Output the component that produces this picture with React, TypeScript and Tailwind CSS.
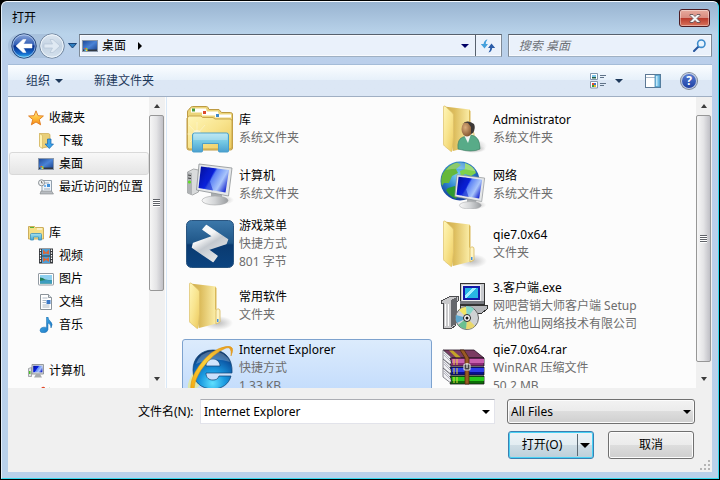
import React from "react";

type IconProps = { className?: string };

function Gradients() {
  return (
    <svg className="absolute size-0" aria-hidden="true">
      <defs>
        <linearGradient id="folderFront" x1="0" y1="0" x2="1" y2="1">
          <stop offset="0" stopColor="#fff6b8" />
          <stop offset="0.5" stopColor="#f8e48e" />
          <stop offset="1" stopColor="#ecc95c" />
        </linearGradient>
        <linearGradient id="folderBack" x1="0" y1="0" x2="1" y2="0">
          <stop offset="0" stopColor="#cfae50" />
          <stop offset="0.35" stopColor="#dcbc5c" />
          <stop offset="0.85" stopColor="#f9eaa2" />
          <stop offset="1" stopColor="#f3dd88" />
        </linearGradient>
        <linearGradient id="glassBlue" x1="0" y1="0" x2="0" y2="1">
          <stop offset="0" stopColor="#a8e0ee" />
          <stop offset="0.5" stopColor="#72c6e2" />
          <stop offset="1" stopColor="#4a9fd0" />
        </linearGradient>
        <linearGradient id="screenBlue" x1="0" y1="0.2" x2="1" y2="0.7">
          <stop offset="0" stopColor="#0310a0" />
          <stop offset="0.4" stopColor="#0a22e0" />
          <stop offset="0.46" stopColor="#5d83f5" />
          <stop offset="0.75" stopColor="#a9c5fb" />
          <stop offset="1" stopColor="#1a2ad0" />
        </linearGradient>
        <linearGradient id="metal" x1="0" y1="0" x2="1" y2="0">
          <stop offset="0" stopColor="#f8f8f8" />
          <stop offset="0.5" stopColor="#d2d4d6" />
          <stop offset="1" stopColor="#9a9da0" />
        </linearGradient>
        <linearGradient id="deskBlue" x1="0" y1="0" x2="1" y2="1">
          <stop offset="0" stopColor="#1d4796" />
          <stop offset="0.5" stopColor="#4a83d6" />
          <stop offset="1" stopColor="#163c86" />
        </linearGradient>
        <linearGradient id="gameBg" x1="0" y1="0" x2="0" y2="1">
          <stop offset="0" stopColor="#3c78aa" />
          <stop offset="0.48" stopColor="#1f5688" />
          <stop offset="0.52" stopColor="#0a3a70" />
          <stop offset="1" stopColor="#0c4480" />
        </linearGradient>
        <linearGradient id="gameArrow" x1="0" y1="0" x2="0.6" y2="1">
          <stop offset="0" stopColor="#ffffff" />
          <stop offset="0.4" stopColor="#f4f5f6" />
          <stop offset="0.6" stopColor="#c4c9cf" />
          <stop offset="1" stopColor="#e4e6e8" />
        </linearGradient>
        <radialGradient id="ieBlue" cx="0.5" cy="0.85" r="0.8">
          <stop offset="0" stopColor="#5fe0ff" />
          <stop offset="0.4" stopColor="#1b9ae0" />
          <stop offset="0.8" stopColor="#0c5aa8" />
          <stop offset="1" stopColor="#123a6c" />
        </radialGradient>
        <linearGradient id="ieGold" x1="0" y1="1" x2="1" y2="0">
          <stop offset="0" stopColor="#f3a80c" />
          <stop offset="0.5" stopColor="#fbd03c" />
          <stop offset="1" stopColor="#e79a1c" />
        </linearGradient>
        <radialGradient id="globe" cx="0.45" cy="0.35" r="0.65">
          <stop offset="0" stopColor="#7fd4f4" />
          <stop offset="0.5" stopColor="#2f86d0" />
          <stop offset="1" stopColor="#123c98" />
        </radialGradient>
        <linearGradient id="navBlue" x1="0" y1="0" x2="0" y2="1">
          <stop offset="0" stopColor="#8fa9dc" />
          <stop offset="0.45" stopColor="#2f5cb4" />
          <stop offset="0.5" stopColor="#0a2f8c" />
          <stop offset="0.8" stopColor="#1266c8" />
          <stop offset="1" stopColor="#3fc4f4" />
        </linearGradient>
        <linearGradient id="navGray" x1="0" y1="0" x2="0" y2="1">
          <stop offset="0" stopColor="#dde7f1" />
          <stop offset="0.5" stopColor="#c3d2e2" />
          <stop offset="1" stopColor="#d6e2ee" />
        </linearGradient>
        <linearGradient id="star" x1="0" y1="0" x2="0" y2="1">
          <stop offset="0" stopColor="#fff0a0" />
          <stop offset="0.5" stopColor="#ffc03a" />
          <stop offset="1" stopColor="#f58a1c" />
        </linearGradient>
        <linearGradient id="noteBlue" x1="0" y1="0" x2="1" y2="1">
          <stop offset="0" stopColor="#4ab4ec" />
          <stop offset="1" stopColor="#1670c0" />
        </linearGradient>
        <radialGradient id="softShadow">
          <stop offset="0" stopColor="#8a8a8a" stopOpacity="0.55" />
          <stop offset="1" stopColor="#8a8a8a" stopOpacity="0" />
        </radialGradient>
        <radialGradient id="skin" cx="0.35" cy="0.4" r="0.7">
          <stop offset="0" stopColor="#dcae7c" />
          <stop offset="1" stopColor="#7a4c28" />
        </radialGradient>
      </defs>
    </svg>
  );
}

/* ---------- large icons ---------- */

const large = "size-12 shrink-0";

function LibraryIcon() {
  return (
    <svg className={large} viewBox="0 0 48 48">
      <path d="M1.500 13V7q0-1.500 1-2l2-2.500q1-1 2-1h14q1 0 1.500 1l1 2h10l2.500 3h9q1.500 0 2 1.500v34q0 2-2 2H3q-2 0-2-2V13z" fill="#ecd57a" stroke="#bd9a43" />
      <path d="M5 3.500h15l1 4H5z" fill="#fff" /><path d="M6 3.500h3v3H6z" fill="#4a9c3c" />
      <path d="M16 6.500h16l1 4H16z" fill="#fff" /><path d="M17 6h3v3h-3z" fill="#dd4a2c" />
      <path d="M29 9.500h16v3H29z" fill="#fff" /><path d="M30 9h3v3h-3z" fill="#3d87c8" />
      <path d="M1.500 13q0-2 2-2H15l1.500 1.500H27l2 1.500h15q2 0 2 2v26q0 2-2 2H3.500q-2 0-2-2z" fill="url(#folderFront)" stroke="#c9a64c" />
      <path d="M11 17v28M1 29h22M3 20l16 17M19 20L4 37" stroke="#fff" strokeOpacity="0.4" strokeWidth="0.800" />
      <circle cx="11" cy="29" r="4" fill="#fff" fillOpacity="0.45" />
      <path d="M6.500 30q0-2 2-2h32q2 0 2 2v16q0 1-1 1h-8q-1 0-1-1v-7.500h-16V46q0 1-1 1h-8q-1 0-1-1z" fill="url(#glassBlue)" stroke="#4b9fc9" />
      <path d="M7.500 30q0-1.500 1.500-1.500h31q1.500 0 1.500 1.500v5h-34z" fill="#fff" fillOpacity="0.25" />
    </svg>
  );
}

function Monitor({ transform }: { transform?: string }) {
  return (
    <g transform={transform}>
      <ellipse cx="35" cy="38" rx="13" ry="5" fill="url(#softShadow)" />
      <path d="M25 29l11 2v7H25z" fill="#a9adb0" />
      <ellipse cx="29" cy="38.500" rx="13" ry="4.500" fill="url(#metal)" stroke="#a4a6a8" strokeWidth="0.600" />
      <path d="M13 2l33 4-3.500 28L10.500 28z" fill="#e5e7e9" stroke="#8c9093" strokeWidth="0.800" />
      <path d="M15 4.500L43 8l-3.500 22.500-27-4.500z" fill="url(#screenBlue)" />
      <path d="M22 5.500l6 1-4 13 3 9-8-1.500z" fill="#0a1ec8" fillOpacity="0.55" />
    </g>
  );
}

function ComputerIcon() {
  return (
    <svg className={large} viewBox="0 0 48 48">
      <path d="M1.500 11l6-3 5 1v22l-6 3-5-2z" fill="#d9dbdc" stroke="#8d8f90" strokeWidth="0.700" />
      <path d="M1.500 11l4.500 1v22l-4.500-2z" fill="#b0b3b5" />
      <path d="M2 14l3 .6M2 17l3 .6" stroke="#444" />
      <circle cx="3.500" cy="21" r="1.600" fill="#5ddf24" />
      <Monitor transform="translate(0 1)" />
    </svg>
  );
}

function NetworkIcon() {
  return (
    <svg className={large} viewBox="0 0 48 48">
      <circle cx="20" cy="20" r="19.500" fill="url(#globe)" />
      <path d="M3 12Q9 3 17 1.500l4 2.500-5 4 2 4-6 3-3 7-5 0-2 3q-2-7 1-13z" fill="#66b83c" />
      <path d="M25 2q9 3 11 10l-5 3-6-2-4 3-1-6 5-2z" fill="#7fd04c" />
      <path d="M8 27l7-2 5 5-4 8q-7-3-10-9z" fill="#2e9a30" />
      <path d="M6 9Q12 1 21 1.500q10 1 15 9Q20 6 6 9z" fill="#fff" fillOpacity="0.25" />
      <Monitor transform="translate(6 12) scale(.84)" />
    </svg>
  );
}

function FolderShape() {
  return (
    <g>
      <ellipse cx="32" cy="41" rx="15" ry="7" fill="url(#softShadow)" />
      <path d="M4 1.500l26 3V28l3-1.500V41l-20 5z" fill="url(#folderBack)" />
      <path d="M29 5l1.500 1v21L29 28z" fill="#d9b858" />
      <path d="M30 29q0-2 1.500-2h1q1.500 0 1.500 2v11l-4 2z" fill="#fdf4c6" stroke="#d6b65c" strokeWidth="0.800" />
      <path d="M31 37h1.500v3H31z" fill="#3f8fe0" />
      <path d="M3.500 2q0-1.500 1.500-1L12.500 8q1 1 1 2v22l-1.500 14q-.5 1-1.500 0L4.500 41q-1-.7-1-2z" fill="url(#folderFront)" stroke="#dcc06a" strokeWidth="0.700" />
    </g>
  );
}

function FolderIcon() {
  return <svg className={large} viewBox="0 0 48 48"><FolderShape /></svg>;
}

function UserFolderIcon() {
  return (
    <svg className={large} viewBox="0 0 48 48">
      <FolderShape />
      <ellipse cx="34" cy="44" rx="12" ry="4" fill="url(#softShadow)" />
      <path d="M18 44q-1-10 5-12l8-2q9 1 9 14-8 4-22 0z" fill="#58ab88" stroke="#387a5e" strokeWidth="0.600" />
      <path d="M24 30l4 8 3-9-1-3h-5z" fill="#f2f6f4" />
      <ellipse cx="27" cy="24" rx="5.500" ry="7.500" fill="url(#skin)" />
      <path d="M21 20q2-3 7-2l3 4v7l2-1q3-5 1-9-6-5-12 0z" fill="#3c3837" />
    </svg>
  );
}

function GameMenuIcon() {
  return (
    <svg className={large} viewBox="0 0 48 48">
      <rect x="0.500" y="0.500" width="47" height="47" rx="5" fill="url(#gameBg)" stroke="#2a5580" />
      <path
        d="M20.500 5.500L41.500 19.500 40 23.500 22 29.500 31 36 27 41.500 6.500 27.500 7.500 23.500 27 16.500 17 9.500z"
        fill="url(#gameArrow)"
        stroke="url(#gameArrow)"
        strokeWidth="1.500"
        strokeLinejoin="round"
      />
    </svg>
  );
}

function IEIcon() {
  return (
    <svg className={large} viewBox="0 0 48 48">
      <path d="M8 27Q-1 42 3 46q4 2 10-4l-3-11z" fill="#e2ea9a" fillOpacity="0.8" />
      <path fillRule="evenodd" d="M27 6C15 6 7 14 7 26s8 19 20 19c9 0 16-5 18-13H33c-1 3-3 4-6 4-4 0-7-2-7-7h26C47 15 39 6 27 6zM20 22c0-4 3-7 7-7s7 3 7 7z" fill="url(#ieBlue)" stroke="#0e4072" strokeWidth="0.700" />
      <path d="M10 20Q14 8 27 7q13 1 17 11-16-6-34 2z" fill="#fff" fillOpacity="0.24" />
      <path d="M45 12Q50 1 40 2.500 25 5 13 22 3 36 5 47q1 2 4 0Q6 41 15 26 27 9 40 4q6-2 5 8z" fill="url(#ieGold)" stroke="#d88e10" strokeWidth="0.500" />
    </svg>
  );
}

function SetupIcon() {
  return (
    <svg className={large} viewBox="0 0 48 48" shapeRendering="crispEdges">
      <path d="M20 1h24v21H20z" fill="#c8cace" stroke="#333" strokeWidth="1" />
      <path d="M20 19h24v3H20z" fill="#777a80" />
      <path d="M22 3h19v16H22z" fill="#f0f0f0" />
      <path d="M23 4h17v14H23z" fill="#1219a8" />
      <path d="M25 6h13v10H25z" fill="#27b6e4" />
      <path d="M25 13l7-7h4L26 16h-1z" fill="#a0f0ff" />
      <path d="M20 23h27v4l-5 4H20z" fill="#b5b7bb" stroke="#333" />
      <path d="M1 19l10-5h7v5l-3 1v24l-3 2H3V21H1z" fill="#c9c9cb" stroke="#4c4c4f" />
      <path d="M11 18l6-3v26l-6 4z" fill="#65676c" />
      <path d="M5 22v22M8 22v22" stroke="#fff" />
      <g shapeRendering="auto">
        <circle cx="27" cy="36" r="11.500" fill="#cfd2d4" stroke="#666" />
        <path d="M27 36L19 28q3-3 7-3z" fill="#f2e664" />
        <path d="M27 36L26 24q5 0 8 3z" fill="#85d7c8" />
        <path d="M27 36L16 33q-1 5 1 8z" fill="#5fa9cf" />
        <path d="M27 36l8 8q-4 4-9 3z" fill="#e9d76c" />
        <path d="M27 36l-1 11q-5-1-8-4z" fill="#6bc090" />
        <circle cx="27" cy="36" r="3.500" fill="#fff" stroke="#222" />
        <circle cx="27" cy="36" r="1.500" fill="#111" />
      </g>
    </svg>
  );
}

function RarIcon() {
  const books = [
    { y: 13, top: "#c95fae", side: "#8c2b78" },
    { y: 22, top: "#2c3be8", side: "#08108c" },
    { y: 31, top: "#28c81c", side: "#0c6c08" },
  ];
  return (
    <svg className={large} viewBox="0 0 48 48">
      <path d="M3 6h31l10 8H12z" fill="#7a3c62" stroke="#251022" strokeWidth="0.800" />
      <path d="M9 6.500h4l8 7h-5z" fill="#c4a428" />
      {books.map((b) => (
        <g key={b.y}>
          <path d={`M3 ${b.y - 7}l9 8v8l-9-7z`} fill="#f1f1f4" stroke="#55555f" strokeWidth="0.700" />
          <path d={`M4 ${b.y - 4}l7 7M4 ${b.y - 2}l7 7`} stroke="#8c8c9a" strokeWidth="0.600" />
          <path d={`M10 ${b.y + 1}h34v8H10q3-4 0-8z`} fill={b.side} stroke="#161616" strokeWidth="0.800" />
          <path d={`M12 ${b.y + 2}h32v4H12z`} fill={b.top} />
          <path d={`M14 ${b.y + 2}v6M17 ${b.y + 2}v6`} stroke="#e8d93e" strokeWidth="1" />
        </g>
      ))}
      <path d="M20 6h4l5 8v26h-4V14z" fill="#9a5a24" stroke="#4e2a0c" strokeWidth="0.800" />
      <rect x="24" y="20" width="6" height="6" rx="1" fill="#444" stroke="#d8d8d8" strokeWidth="1.200" />
      <path d="M27 19v5" stroke="#fff" />
    </svg>
  );
}

/* ---------- small icons ---------- */

const small = "size-4 shrink-0";

function StarIcon() {
  return (
    <svg className={small} viewBox="0 0 16 16">
      <path d="M8 .8l2 4.900 5.400.3-4.100 3.500 1.300 5.300L8 12l-4.600 2.800 1.300-5.300L.6 6 6 5.700z" fill="url(#star)" stroke="#e07a1c" strokeWidth="0.900" />
    </svg>
  );
}
function DownloadIcon() {
  return (
    <svg className={small} viewBox="0 0 16 16">
      <path d="M1.500.5h9l1.500 1v12l-8 1.500-2.500-2z" fill="#e9cf78" stroke="#c9a850" strokeWidth="0.700" />
      <path d="M1.500.5l3 2v13l-3-2z" fill="#fff2b0" stroke="#cfb05a" strokeWidth="0.600" />
      <path d="M9.500 6h3.500v5h2.500L11.300 15.500 7 11h2.500z" fill="#3ba2e8" stroke="#1766ac" strokeWidth="0.700" />
    </svg>
  );
}
function DesktopIcon() {
  return (
    <svg className={small} viewBox="0 0 16 16">
      <rect x="0.500" y="2.500" width="15" height="11" fill="url(#deskBlue)" stroke="#8b98aa" />
      <path d="M1 11.500h14V13H1z" fill="#303844" />
      <path d="M2.500 10h1.500v1.500H2.500z" fill="#f15a2c" /><path d="M4 10h1.500v1.500H4z" fill="#7ed048" />
      <path d="M2.500 11.500h1.500V13H2.500z" fill="#4cc8f0" /><path d="M4 11.500h1.500V13H4z" fill="#f8dc38" />
    </svg>
  );
}
function RecentIcon() {
  return (
    <svg className={small} viewBox="0 0 16 16">
      <path d="M4 1.500h9.500v11H4z" fill="#eef4fa" stroke="#93a0ac" />
      <path d="M6 4h5M6 10h6" stroke="#9aaabb" /><path d="M9 5h3v3H9z" fill="#4090dd" /><path d="M6 6h2v2H6z" fill="#79b5ea" />
      <path d="M3 12h10.500l2 3H2z" fill="#b8bcc1" stroke="#84888c" strokeWidth="0.600" />
      <circle cx="3.500" cy="3.800" r="3" fill="#eef1f3" stroke="#8b9196" /><path d="M3.500 2v2H5" stroke="#555" strokeWidth="0.700" fill="none" />
    </svg>
  );
}
function SmallLibraryIcon() {
  return (
    <svg className={small} viewBox="0 0 16 16">
      <path d="M.5 3V1.500h6l1 1H15q.5 0 .5.500v11H.5z" fill="#f6df86" stroke="#c09d45" strokeWidth="0.800" />
      <path d="M2 2h4v1H2z" fill="#55b33b" /><path d="M9 3.500h5v1H9z" fill="#fff" />
      <path d="M2.500 15V9.500q0-1 1-1h9q1 0 1 1V15h-3v-3H5.500v3z" fill="url(#glassBlue)" stroke="#3c92bd" strokeWidth="0.800" />
    </svg>
  );
}
function VideoIcon() {
  return (
    <svg className={small} viewBox="0 0 16 16">
      <path d="M1 .5h14v15H1z" fill="#36393d" />
      <path d="M4 1h8v6.500H4zM4 8.500h8V15H4z" fill="#4a9fd8" />
      <path d="M5 1.500l3 3 3-3v5l-3-1-3 1zM5 9l3 2 3-2v5l-3-2-3 2z" fill="#d8683a" />
      <path d="M2.500 1.500v13M13.500 1.500v13" stroke="#fff" strokeWidth="1.200" strokeDasharray="1.500 1.200" />
    </svg>
  );
}
function PictureIcon() {
  return (
    <svg className={small} viewBox="0 0 16 16">
      <rect x="0.500" y="2.500" width="15" height="11.500" rx="0.500" fill="#fff" stroke="#939ba3" />
      <path d="M2 4h12v8.500H2z" fill="#8fd0f0" />
      <path d="M2 6.500q3 0 5 2l7 1v3H2z" fill="#23805a" /><path d="M2 10q6-1.500 12-.5v3H2z" fill="#3d9cc0" />
    </svg>
  );
}
function DocumentIcon() {
  return (
    <svg className={small} viewBox="0 0 16 16">
      <path d="M2.500.5h8l3 3v12h-11z" fill="#fff" stroke="#8c949b" /><path d="M10.500.5v3h3" fill="#dce4ec" stroke="#8c949b" />
      <path d="M4.500 4h5M4.500 6.500H8M4.500 8.500H8M4.500 11h7M4.500 13h7" stroke="#a3b0bd" strokeWidth="0.900" />
      <path d="M8.500 6h4v4h-4z" fill="#3a78c6" />
    </svg>
  );
}
function MusicIcon() {
  return (
    <svg className={small} viewBox="0 0 16 16">
      <path d="M8.500 0H10q0 2.500 2.500 4.500 3 2.500.5 6.500 0-4-3-5v6.500q-.5 3-4.200 3.300Q2 16 2 13.300 2.300 10.500 5.500 10.200q2-.2 3 .3z" fill="url(#noteBlue)" stroke="#1a6cae" strokeWidth="0.500" />
    </svg>
  );
}
function SmallComputerIcon() {
  return (
    <svg className={small} viewBox="0 0 16 16">
      <path d="M.5 5.500l3-1v9h-3z" fill="#dfe1e3" stroke="#85898c" strokeWidth="0.700" /><path d="M1 8h1.500v3H1z" fill="#4cc22a" />
      <path d="M4 1.500h11.500v9.500H4z" fill="#d5d8da" stroke="#8d9295" strokeWidth="0.900" />
      <path d="M5.200 2.800h9.200v6.500H5.200z" fill="url(#screenBlue)" />
      <path d="M8 11h4l2 3.500H6z" fill="#a7abae" />
    </svg>
  );
}
function WindowsDiskIcon() {
  return (
    <svg className={small} viewBox="0 0 16 16">
      <path d="M2 3.500Q4.500-.5 7 1.500V5L2 6z" fill="#e0492a" /><path d="M7.500 2Q10 3 12 1.500l-1 5-3.500-1z" fill="#55b33b" />
      <path d="M1 7h14v6H1z" fill="#b5b9bc" />
    </svg>
  );
}

function Caret({ className = "" }: IconProps) {
  return (
    <svg className={`h-1 w-2 shrink-0 ${className}`} viewBox="0 0 8 4" fill="currentColor">
      <path d="M0 0h8L4 4z" />
    </svg>
  );
}

/* ---------- scroll bar ---------- */

function ScrollBar({ thumb, label }: { thumb: number; label: string }) {
  return (
    <div className="flex w-4 shrink-0 flex-col bg-[#f0f0f0]">
      <button aria-label={`${label} ▲`} className="flex h-[18px] shrink-0 items-center justify-center text-[#3c3c3c]">
        <svg className="h-1 w-1.5" viewBox="0 0 6 4" fill="currentColor"><path d="M0 4h6L3 0z" /></svg>
      </button>
      <div className="min-h-0 flex-1">
        <div
          className="flex w-[15px] flex-col items-center justify-center gap-px rounded-xs border border-[#979797] bg-linear-to-r from-[#f6f6f6] via-[#e4e4e6] to-[#c0c0c6]"
          style={{ height: `${thumb}%` }}
        >
          {[0, 1, 2, 3].map((i) => <span key={i} className="h-px w-[7px] bg-[#5f6268] shadow-[0_1px_0_#ffffff]" />)}
        </div>
      </div>
      <button aria-label={`${label} ▼`} className="flex h-[18px] shrink-0 items-center justify-center text-[#3c3c3c]">
        <svg className="h-1 w-1.5" viewBox="0 0 6 4" fill="currentColor"><path d="M0 0h6L3 4z" /></svg>
      </button>
    </div>
  );
}

/* ---------- data ---------- */

type Place = { name: string; icon: () => React.JSX.Element; selected?: boolean };
type Group = { name: string; icon: () => React.JSX.Element; children: Place[] };

const groups: Group[] = [
  {
    name: "收藏夹",
    icon: StarIcon,
    children: [
      { name: "下载", icon: DownloadIcon },
      { name: "桌面", icon: DesktopIcon, selected: true },
      { name: "最近访问的位置", icon: RecentIcon },
    ],
  },
  {
    name: "库",
    icon: SmallLibraryIcon,
    children: [
      { name: "视频", icon: VideoIcon },
      { name: "图片", icon: PictureIcon },
      { name: "文档", icon: DocumentIcon },
      { name: "音乐", icon: MusicIcon },
    ],
  },
  { name: "计算机", icon: SmallComputerIcon, children: [{ name: "", icon: WindowsDiskIcon }] },
];

type Item = { name: string; lines: string[]; icon: () => React.JSX.Element; selected?: boolean };

const items: Item[] = [
  { name: "库", lines: ["系统文件夹"], icon: LibraryIcon },
  { name: "Administrator", lines: ["系统文件夹"], icon: UserFolderIcon },
  { name: "计算机", lines: ["系统文件夹"], icon: ComputerIcon },
  { name: "网络", lines: ["系统文件夹"], icon: NetworkIcon },
  { name: "游戏菜单", lines: ["快捷方式", "801 字节"], icon: GameMenuIcon },
  { name: "qie7.0x64", lines: ["文件夹"], icon: FolderIcon },
  { name: "常用软件", lines: ["文件夹"], icon: FolderIcon },
  { name: "3.客户端.exe", lines: ["网吧营销大师客户端 Setup", "杭州他山网络技术有限公司"], icon: SetupIcon },
  { name: "Internet Explorer", lines: ["快捷方式", "1.33 KB"], icon: IEIcon, selected: true },
  { name: "qie7.0x64.rar", lines: ["WinRAR 压缩文件", "50.2 MB"], icon: RarIcon },
];

/* ---------- sections ---------- */

function TitleBar() {
  return (
    <header className="flex h-8 shrink-0 items-center justify-between pr-0.5 pl-1">
      <h1>打开</h1>
      <button
        aria-label="关闭"
        className="flex h-[18px] w-[31px] items-center justify-center rounded-[3px] border border-[#4e1c22] bg-[linear-gradient(#e7aa9d,#d98c80_48%,#b8382a_50%,#d8735c)] shadow-[inset_0_0_0_1px_#ffffff66]"
      >
        <svg className="h-[9px] w-3" viewBox="0 0 12 9">
          <path d="M1 .5h3l2 2 2-2h3v1L8 4.500l3 3v1H8l-2-2-2 2H1v-1l3-3-3-3z" fill="#f4f4f4" stroke="#54484e" strokeWidth="0.800" />
        </svg>
      </button>
    </header>
  );
}

function AddressRow() {
  return (
    <nav className="flex h-[30px] shrink-0 items-start">
      <div className="flex gap-0.5 rounded-full bg-[#9fb8d4]/60 pl-[3px]">
        <button aria-label="后退" className="-my-px">
          <svg className="size-[26px]" viewBox="0 0 26 26">
            <circle cx="13" cy="13" r="12.200" fill="url(#navBlue)" stroke="#2e4a7a" />
            <circle cx="13" cy="13" r="11.200" fill="none" stroke="#cfe4fa" strokeOpacity="0.6" />
            <path d="M5 13l7-6.500h3L12.500 11H21v4h-8.500l2.500 4.500h-3z" fill="#fff" stroke="#fff" strokeWidth="0.500" strokeLinejoin="round" />
          </svg>
        </button>
        <button aria-label="前进" className="-my-px">
          <svg className="size-[26px]" viewBox="0 0 26 26">
            <circle cx="13" cy="13" r="12.200" fill="url(#navGray)" stroke="#71859e" />
            <circle cx="13" cy="13" r="11.200" fill="none" stroke="#eef5fb" />
            <path d="M21 13l-7-6.500h-3l2.500 4.500H5v4h8.500L11 19.500h3z" fill="#dfe9f3" stroke="#b4c4d6" strokeWidth="0.700" strokeLinejoin="round" />
          </svg>
        </button>
      </div>
      <button aria-label="最近的页面" className="flex h-6 w-[14px] items-center justify-center">
        <svg className="h-1.5 w-[9px]" viewBox="0 0 9 6"><path d="M.5.5h8L4.500 5z" fill="#2f7fc0" stroke="#1b4578" /></svg>
      </button>
      <div className="flex h-[23px] flex-1 border border-t-[#57616e] border-r-[#7f8a97] border-b-[#9fb0c3] border-l-[#7f8a97] bg-[#eaf1fb] shadow-[inset_0_0_0_1px_#ffffffaa]">
        <button className="flex flex-1 items-center pl-0.5">
          <DesktopIcon />
          <span className="ml-1">桌面</span>
          <svg className="ml-3 h-2 w-1" viewBox="0 0 4 8"><path d="M0 0l4 4-4 4z" /></svg>
        </button>
        <button aria-label="以前的位置" className="flex w-5 items-center justify-center text-[#000066]"><Caret /></button>
        <button aria-label="刷新" className="flex w-[26px] items-center justify-center border-l border-[#57616e]">
          <svg className="size-4" viewBox="0 0 16 16">
            <path d="M7.500 1.500Q4.500 1.500 3.500 6H.8l3.700 4.500L8 6H5.800q0-2.500 1.700-4.500z" fill="#45a0dc" />
            <path d="M8.500 14.500q3-.5 3.700-4.500h3l-3.700-4.500L8 10h2.200q0 2.500-1.700 4.500z" fill="#2a5ca8" />
          </svg>
        </button>
      </div>
      <div className="ml-1.5 flex h-[23px] w-[29%] items-center border border-t-[#57616e] border-r-[#7f8a97] border-b-[#9fb0c3] border-l-[#7f8a97] bg-[#eaf1fb] pr-[5px] shadow-[inset_0_0_0_1px_#ffffffaa]">
        <input aria-label="搜索" placeholder="搜索 桌面" className="min-w-0 flex-1 bg-transparent pl-2.5 italic outline-none placeholder:text-[#6e7278]" />
        <button aria-label="开始搜索">
          <svg className="size-[13px]" viewBox="0 0 13 13" fill="none">
            <path d="M5.500 7.500L1 12" stroke="#28559c" strokeWidth="2" strokeLinecap="round" />
            <circle cx="8.300" cy="4.700" r="3.700" fill="#e8f4fe" stroke="#3f8ccc" strokeWidth="1.600" />
          </svg>
        </button>
      </div>
    </nav>
  );
}

function ToolBar() {
  return (
    <div className="flex h-[33px] shrink-0 items-center border-t border-b border-t-[#a5bcd8] border-b-[#a0afc3] bg-linear-to-b from-[#fbfdff] from-0% via-[#e6f0fa] via-49% to-[#dce7f5] to-50% pr-[15px] pl-[18px] text-[#1e395b]">
      <button className="flex items-center gap-[5px]">组织 <Caret /></button>
      <button className="ml-[31px]">新建文件夹</button>
      <div className="ml-auto flex items-center">
        <button aria-label="更改视图" className="flex items-center gap-[9px]">
          <svg className="size-4" viewBox="0 0 16 16">
            <path d="M.5.5h7v6h-7zM.5 8.500h7v6.500h-7z" fill="#fff" stroke="#8296ac" />
            <path d="M2 2h4v2H2z" fill="#7cc4e8" /><path d="M2 4h4v1.500H2z" fill="#235f45" />
            <path d="M2 10h2v2H2z" fill="#e04a30" /><path d="M4 10h2v2H4z" fill="#3c78cc" />
            <path d="M2 12h2v2H2z" fill="#3c9c38" /><path d="M4 12h2v2H4z" fill="#eebc2c" />
            <path d="M10 2.500h6M10 4.500h4M10 10.500h6M10 12.500h4" stroke="#5f7288" />
          </svg>
          <Caret />
        </button>
        <button aria-label="预览窗格" className="ml-[22px]">
          <svg className="size-4" viewBox="0 0 16 16">
            <rect x="0.500" y="1.500" width="15" height="13" fill="#fff" stroke="#5c7894" />
            <path d="M1 4.500h9" stroke="#a8b8c8" /><path d="M10 2h5v12h-5z" fill="#74bfe6" stroke="#4a88b0" strokeWidth="0.800" />
            <path d="M11 3h1.500v10H11z" fill="#c2e8f8" />
          </svg>
        </button>
        <button aria-label="帮助" className="ml-5 flex size-4 items-center justify-center rounded-full bg-linear-to-b from-[#5c7fd4] to-[#1a3ba0] text-xs leading-4 font-bold text-white shadow-[0_0_0_1px_#7f8792,inset_0_0_0_1px_#c9d0dc]">
          ?
        </button>
      </div>
    </div>
  );
}

function SideBar() {
  return (
    <aside className="flex w-[159px] shrink-0 border-r border-[#d9e8f7] pr-px">
      <div className="min-w-0 flex-1 overflow-hidden pt-[9px] pl-px">
        {groups.map((g) => (
          <section key={g.name} className="mb-[23px]">
            <button className="flex h-[23px] w-full items-center gap-[5px] pl-[19px]">
              <g.icon />
              {g.name}
            </button>
            {g.children.map((p) => (
              <button
                key={p.name}
                aria-label={p.name || "磁盘"}
                className={`flex h-[23px] w-full items-center gap-[5px] rounded-[3px] border pl-7 whitespace-nowrap ${
                  p.selected ? "border-[#d9d9d9] bg-linear-to-b from-[#f8f8f8] to-[#e5e5e5]" : "border-transparent"
                }`}
              >
                <p.icon />
                {p.name}
              </button>
            ))}
          </section>
        ))}
      </div>
      <ScrollBar thumb={69} label="文件夹" />
    </aside>
  );
}

function FileList() {
  return (
    <main className="flex min-w-0 flex-1">
      <ul className="grid min-w-0 flex-1 auto-rows-max grid-cols-[repeat(auto-fill,250px)] gap-1 overflow-hidden pt-1.5 pl-[15px]">
        {items.map((it) => (
          <li key={it.name} className="flex">
            <button
              className={`flex min-h-[52px] w-full items-center gap-[5px] rounded-[3px] border px-[3px] py-px text-left ${
                it.selected ? "border-[#7da2ce] bg-linear-to-b from-[#dcebfc] to-[#c1dbfc]" : "border-transparent"
              }`}
            >
              <it.icon />
              <span className="flex min-w-0 flex-col text-[#6d6d6d]">
                <span className="text-black">{it.name}</span>
                {it.lines.map((l) => <span key={l} className="whitespace-nowrap">{l}</span>)}
              </span>
            </button>
          </li>
        ))}
      </ul>
      <ScrollBar thumb={97} label="文件" />
    </main>
  );
}

function Footer() {
  return (
    <footer className="relative flex h-[84px] shrink-0 flex-col gap-[7px] bg-[#f0f0f0] pt-[11px] pr-[17px] pl-[130px]">
      <div className="flex items-center">
        <label htmlFor="filename" className="w-[62px] shrink-0">文件名(N):</label>
        <div className="flex h-[25px] min-w-0 flex-1 items-center border border-[#e2e3ea] border-t-[#abadb3] bg-white pr-1">
          <input id="filename" defaultValue="Internet Explorer" className="min-w-0 flex-1 bg-transparent pl-[3px] outline-none" />
          <button aria-label="文件名列表"><Caret /></button>
        </div>
        <div className="relative ml-3 w-[188px] shrink-0">
          <select
            aria-label="文件类型"
            className="block h-[25px] w-full appearance-none rounded-[3px] border border-[#707070] bg-[linear-gradient(#f2f2f2,#ebebeb_49%,#dddddd_50%,#cfcfcf)] pl-[3px] shadow-[inset_0_0_0_1px_#fcfcfc]"
          >
            <option>All Files</option>
          </select>
          <Caret className="pointer-events-none absolute top-[11px] right-1" />
        </div>
      </div>
      <div className="flex justify-end gap-3.5 pr-px">
        <div className="flex h-7 w-[86px] rounded-[3px] border border-[#3c7fb1] bg-[linear-gradient(#edf3f7,#e3edf2_49%,#cfdde5_50%,#bccfda)] py-px pr-px shadow-[inset_0_0_0_1px_#48d2f5]">
          <button className="flex-1 pr-0.5">打开(O)</button>
          <button aria-label="打开选项" className="my-px flex w-[15px] items-center justify-center border-l border-[#5c6a74]">
            <svg className="h-[5px] w-2.5" viewBox="0 0 10 5"><path d="M0 0h10L5 5z" /></svg>
          </button>
        </div>
        <button className="h-7 w-[86px] rounded-[3px] border border-[#707070] bg-[linear-gradient(#f2f2f2,#ebebeb_49%,#dddddd_50%,#cfcfcf)] shadow-[inset_0_0_0_1px_#fcfcfc]">取消</button>
      </div>
      <svg className="absolute right-0.5 bottom-0.5 size-2.5" viewBox="0 0 10 10" fill="#b5b5b5">
        <path d="M8 0h2v2H8zM4 4h2v2H4zM8 4h2v2H8zM0 8h2v2H0zM4 8h2v2H4zM8 8h2v2H8z" />
      </svg>
    </footer>
  );
}

export default function App() {
  return (
    <div className="h-screen min-h-[320px] bg-black p-px font-['Noto_Sans','Noto_Sans_CJK_SC',sans-serif] text-xs leading-[18px] text-black">
      <Gradients />
      <div className="flex h-full flex-col overflow-hidden rounded-t-md border border-t-[#f4f9ff] border-r-[#35d9ee] border-b-[#35d9ee] border-l-[#e4effa] bg-[#b9d1ea] bg-[linear-gradient(#99b4d1,#b9d3ea_32px,#bbcfeb_60px,#b9d1ea)] px-1.5 pb-1.5">
        <TitleBar />
        <AddressRow />
        <ToolBar />
        <div className="flex min-h-0 flex-1 bg-[#fcfcfc]">
          <SideBar />
          <FileList />
        </div>
        <Footer />
      </div>
    </div>
  );
}
